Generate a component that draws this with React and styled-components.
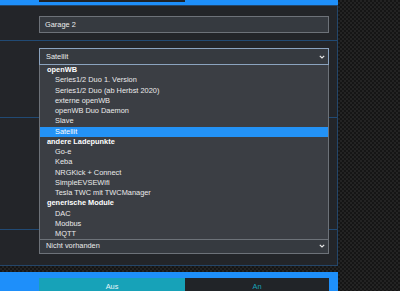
import React from 'react';
import styled, { createGlobalStyle } from 'styled-components';

const GlobalStyle = createGlobalStyle`
  html, body {
    margin: 0;
    padding: 0;
    height: 100%;
    overflow: hidden;
  }
  body {
    font-family: "Liberation Sans", Arial, sans-serif;
    background-color: #232323;
    background-image:
      linear-gradient(45deg, #151515 25%, transparent 25%, transparent 75%, #151515 75%),
      linear-gradient(45deg, #151515 25%, transparent 25%, transparent 75%, #151515 75%);
    background-size: 4px 4px;
    background-position: 0 0, 2px 2px;
  }
`

const Column = styled.div`
  width: 338px;
  display: flex;
  flex-direction: column;
`

const TopCard = styled.div`
  height: 5px;
  background: #1e8ffa;
  padding-left: 39px;
  padding-right: 8px;
  box-sizing: border-box;
  display: flex;
  align-items: flex-start;
`

const TopButton = styled.div`
  width: 146px;
  height: 2px;
  background: #202327;
`

const Card = styled.div`
  background: #232529;
  border: 1px solid #24466a;
  border-left: none;
  display: flex;
  flex-direction: column;
`

const Row = styled.div`
  height: ${p => p.h}px;
  padding: 0 8px 0 39px;
  padding-top: ${p => p.pt}px;
  box-sizing: border-box;
  border-top: ${p => (p.first ? 'none' : '1px solid #214a74')};
`

const Field = styled.div`
  position: relative;
  width: 290px;
`

const TextInput = styled.div`
  height: 17px;
  box-sizing: border-box;
  border: 1px solid #6d7279;
  background: #363a40;
  color: #ececec;
  font-size: 7.4px;
  line-height: 15px;
  padding-left: 5px;
`

const Select = styled(TextInput)`
  border-color: ${p => (p.focused ? '#8ba3bf' : '#6d7279')};
  padding-left: 6px;
  display: flex;
  align-items: center;
  justify-content: space-between;
  padding-right: 3px;
`

const Chevron = () => (
  <svg width="6" height="4" viewBox="0 0 6 4">
    <polyline points="0.8,0.8 3,3 5.2,0.8" fill="none" stroke="#e8e8e8" strokeWidth="1.2" />
  </svg>
);

const ListBox = styled.div`
  position: absolute;
  top: 100%;
  left: 0;
  width: 290px;
  box-sizing: border-box;
  border: 1px solid #6d7279;
  border-top: none;
  background: #3b3e44;
  z-index: 5;
`

const Option = styled.div`
  height: 10.25px;
  line-height: 10.25px;
  font-size: 7.4px;
  white-space: nowrap;
  padding-left: ${p => (p.group ? 7 : 15)}px;
  font-weight: ${p => (p.group ? 700 : 400)};
  color: ${p => (p.group || p.active ? '#ffffff' : '#ebebeb')};
  background: ${p => (p.active ? '#2392f6' : 'transparent')};
`

const Gap = styled.div`
  height: 6px;
`

const BottomCard = styled.div`
  height: 19px;
  box-sizing: border-box;
  overflow: hidden;
  background: #1e8ffa;
  padding: 6px 8px 0 39px;
  display: flex;
`

const ToggleButton = styled.div`
  width: ${p => p.w}px;
  height: 20px;
  flex-shrink: 0;
  background: ${p => (p.on ? '#17a2b8' : '#212428')};
  color: ${p => (p.on ? '#e8f6f8' : '#17a2b8')};
  font-size: 7.4px;
  text-align: center;
  line-height: 17px;
`

const options = [
  { label: 'openWB', group: true },
  { label: 'Series1/2 Duo 1. Version' },
  { label: 'Series1/2 Duo (ab Herbst 2020)' },
  { label: 'externe openWB' },
  { label: 'openWB Duo Daemon' },
  { label: 'Slave' },
  { label: 'Satellit', active: true },
  { label: 'andere Ladepunkte', group: true },
  { label: 'Go-e' },
  { label: 'Keba' },
  { label: 'NRGKick + Connect' },
  { label: 'SimpleEVSEWifi' },
  { label: 'Tesla TWC mit TWCManager' },
  { label: 'generische Module', group: true },
  { label: 'DAC' },
  { label: 'Modbus' },
  { label: 'MQTT' },
];

const App = () => {
  return (
    <>
      <GlobalStyle />
      <Column>
        <TopCard>
          <TopButton />
        </TopCard>
        <Card>
          <Row first h={34} pt={10}>
            <TextInput>Garage 2</TextInput>
          </Row>
          <Row h={77} pt={7}>
            <Field>
              <Select focused>
                <span>Satellit</span>
                <Chevron />
              </Select>
              <ListBox>
                {options.map(o => (
                  <Option key={o.label} group={o.group} active={o.active}>
                    {o.label}
                  </Option>
                ))}
              </ListBox>
            </Field>
          </Row>
          <Row h={112} pt={0} />
          <Row h={36} pt={7}>
            <Select>
              <span>Nicht vorhanden</span>
              <Chevron />
            </Select>
          </Row>
        </Card>
        <Gap />
        <BottomCard>
          <ToggleButton on w={146}>Aus</ToggleButton>
          <ToggleButton w={144}>An</ToggleButton>
        </BottomCard>
      </Column>
    </>
  );
};

export default App;
